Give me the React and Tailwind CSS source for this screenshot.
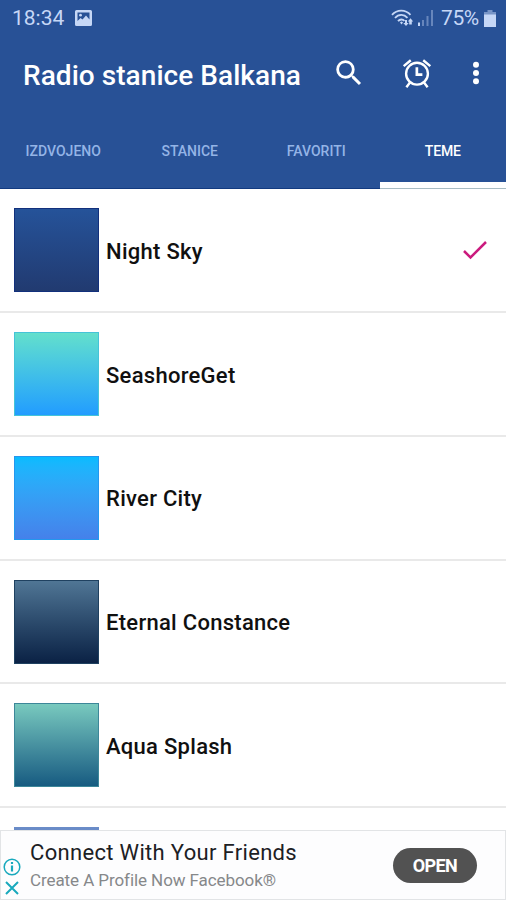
import React, { useState } from "react";

const TABS = ["IZDVOJENO", "STANICE", "FAVORITI", "TEME"];

const THEMES = [
  { name: "Night Sky", swatch: "from-[#25539a] to-[#213a70] border-[#12307c]" },
  { name: "SeashoreGet", swatch: "from-[#64e0cb] to-[#229bff] border-[#45c3d8]" },
  { name: "River City", swatch: "from-[#05bcff] to-[#4580ea] border-[#2497ee]" },
  { name: "Eternal Constance", swatch: "from-[#517796] to-[#0a2144] border-[#1f4160]" },
  { name: "Aqua Splash", swatch: "from-[#7acbbf] to-[#155a80] border-[#3d8799]" },
  { name: "", swatch: "from-[#6a8cc8] to-[#4468b0] border-[#6a8cc8]" },
];

function StatusBar() {
  return (
    <div className="flex h-9 items-center pl-3 pr-[10px] text-[21px] text-[#c6d7f6]">
      <span className="w-[53px] whitespace-nowrap pt-[2px]">18:34</span>
      <svg className="ml-[10px] h-[16px] w-[17px]" viewBox="0 0 17 16" fill="currentColor">
        <path fillRule="evenodd" d="M1.5 0h14A1.5 1.5 0 0 1 17 1.5v13a1.5 1.5 0 0 1-1.5 1.5h-14A1.5 1.5 0 0 1 0 14.5v-13A1.5 1.5 0 0 1 1.5 0zM2.500 2.500v8.500l3-3 2 1.500 3.500-4 3.500 4v-7z" />
        <circle cx="5.500" cy="5.200" r="1.400" />
      </svg>
      <svg className="ml-auto h-[18px] w-[23px]" viewBox="0 0 23 18" fill="none" stroke="currentColor" strokeWidth="1.800">
        <path d="M1 5.800C6 .2 14.500.2 19.500 5.800M4 9c3.500-4 9-4 12.500-.2M7 12.200c2-2.200 4.600-2.200 6.500-.4" />
        <path d="M9 13.600l1.500-1 1.500 1-1.500 2z" fill="currentColor" stroke="none" />
        <path d="M14 11v3h-1.700l2.700 3 2.700-3H16v-3zM18.200 15.500v-3h-1.400l2.700-3.200 2.700 3.200h-1.400v3z" fill="currentColor" stroke="none" />
      </svg>
      <svg className="ml-[4px] h-[16px] w-[16px]" viewBox="0 0 16 16" fill="currentColor">
        <path d="M0 12.500h2V16H0z" />
        <path opacity=".4" d="M4 10h2v6H4zM8.500 6h2v10h-2zM13 0h2v16h-2z" />
      </svg>
      <span className="ml-[7px] w-[39px] whitespace-nowrap pt-[2px] tracking-[-0.4px]">75%</span>
      <svg className="ml-[4px] h-[17px] w-[12px]" viewBox="0 0 12 17" fill="currentColor">
        <path opacity=".5" d="M3.500 0h5v2H12v4H0V2h3.500z" />
        <path d="M0 4.500h12V17H0z" />
      </svg>
    </div>
  );
}

function Toolbar() {
  return (
    <div className="flex h-[77px] items-center pl-[23px] text-white">
      <h1 className="w-[309px] whitespace-nowrap pt-[2px] text-[28px] font-medium tracking-[0.05px]">Radio stanice Balkana</h1>
      <button type="button" className="-mt-[3px]" aria-label="Search">
        <svg className="h-[34px] w-[34px]" viewBox="0 0 24 24" fill="currentColor">
          <path d="M15.500 14h-.79l-.28-.27A6.471 6.471 0 0 0 16 9.500 6.500 6.500 0 1 0 9.500 16c1.610 0 3.090-.59 4.230-1.570l.27.28v.79l5 4.990L20.490 19l-4.990-5zm-6 0C7.010 14 5 11.990 5 9.500S7.010 5 9.500 5 14 7.010 14 9.500 11.990 14 9.500 14z" />
        </svg>
      </button>
      <button type="button" className="-mt-[3px] ml-[34px]" aria-label="Alarm">
        <svg className="h-[34px] w-[34px]" viewBox="0 0 24 24" fill="none" stroke="currentColor">
          <circle cx="12" cy="12.500" r="7.700" strokeWidth="1.700" />
          <path d="M11.900 8v5.200h3.900" strokeWidth="1.900" />
          <path d="M2.600 7.200l5-4.200M21.400 7.200l-5-4.200" strokeWidth="1.700" />
          <path d="M4.500 22l2.700-3.500M19.500 22l-2.700-3.500" strokeWidth="1.700" />
        </svg>
      </button>
      <button type="button" className="-mt-[3px] ml-[37px]" aria-label="More">
        <svg className="h-[26px] w-[10px]" viewBox="0 0 10 26" fill="currentColor">
          <circle cx="5" cy="4.700" r="3" />
          <circle cx="5" cy="13" r="3" />
          <circle cx="5" cy="21.300" r="3" />
        </svg>
      </button>
    </div>
  );
}

function AdBanner() {
  return (
    <div className="absolute inset-x-0 bottom-0 flex h-[70px] border border-[#e2e4e6] bg-[#fdfdfe]">
      <div className="flex w-[29px] flex-col items-start pl-[2px] pt-[27px] text-[#19a9bd]">
        <svg className="h-[18px] w-[18px]" viewBox="0 0 18 18" fill="none" stroke="currentColor" strokeWidth="1.500">
          <circle cx="9" cy="9" r="7.800" />
          <path d="M9 7.500v6M9 4v2" strokeWidth="2.200" />
        </svg>
        <svg className="ml-[2px] mt-[5px] h-[14px] w-[14px]" viewBox="0 0 14 14" stroke="currentColor" strokeWidth="2">
          <path d="M1 1l12 12M13 1L1 13" />
        </svg>
      </div>
      <div className="flex-1 pt-[8px]">
        <div className="whitespace-nowrap text-[22px] leading-[28px] tracking-[0.32px] text-[#1c2024]">Connect With Your Friends</div>
        <div className="whitespace-nowrap text-[17px] leading-[26px] tracking-[-0.08px] text-[#86888a]">
          Create A Profile Now Facebook®
        </div>
      </div>
      <button type="button" className="mr-[28px] mt-[17px] h-[35px] w-[84px] rounded-full bg-[#525252] text-[18px] font-bold tracking-[-0.6px] text-white">
        OPEN
      </button>
    </div>
  );
}

export default function App() {
  const [tab, setTab] = useState("TEME");
  const [selected, setSelected] = useState("Night Sky");

  return (
    <div className="relative h-[900px] w-[506px] overflow-hidden bg-white font-[Roboto,sans-serif]">
      <header className="h-[188px] bg-[#285196]">
        <StatusBar />
        <Toolbar />
        <nav className="grid h-[76px] grid-cols-4">
          {TABS.map((t) => (
            <button
              key={t}
              type="button"
              onClick={() => setTab(t)}
              className={`flex flex-col items-center justify-between pt-[28px] text-[14px] font-medium ${t === tab ? "tracking-[-0.2px] text-white" : "text-[#94b4e6]"}`}
            >
              <span>{t}</span>
              <span className={`h-[7px] w-full border-b ${t === tab ? "border-[#a9bcc4] bg-white" : "border-[#123a80]"}`} />
            </button>
          ))}
        </nav>
      </header>

      <ul className="pt-[1.600px]">
        {THEMES.map((t) => (
          <li
            key={t.name}
            onClick={() => setSelected(t.name)}
            className="flex h-[123.700px] items-center border-b-2 border-[#e9e9e9] pl-[14px] pr-[17px]"
          >
            <div className={`h-[84px] w-[85px] border bg-linear-to-b bg-origin-border ${t.swatch}`} />
            <span className="ml-[7px] flex-1 pt-[2px] text-[22px] font-medium tracking-[0.28px] text-[#101010]">{t.name}</span>
            {t.name === selected && (
              <svg className="h-[20px] w-[28px]" viewBox="0 0 28 20" fill="none" stroke="#cb1b7e" strokeWidth="2.500">
                <path d="M3 11l6.500 6.500L25 2" />
              </svg>
            )}
          </li>
        ))}
      </ul>

      <AdBanner />
    </div>
  );
}
